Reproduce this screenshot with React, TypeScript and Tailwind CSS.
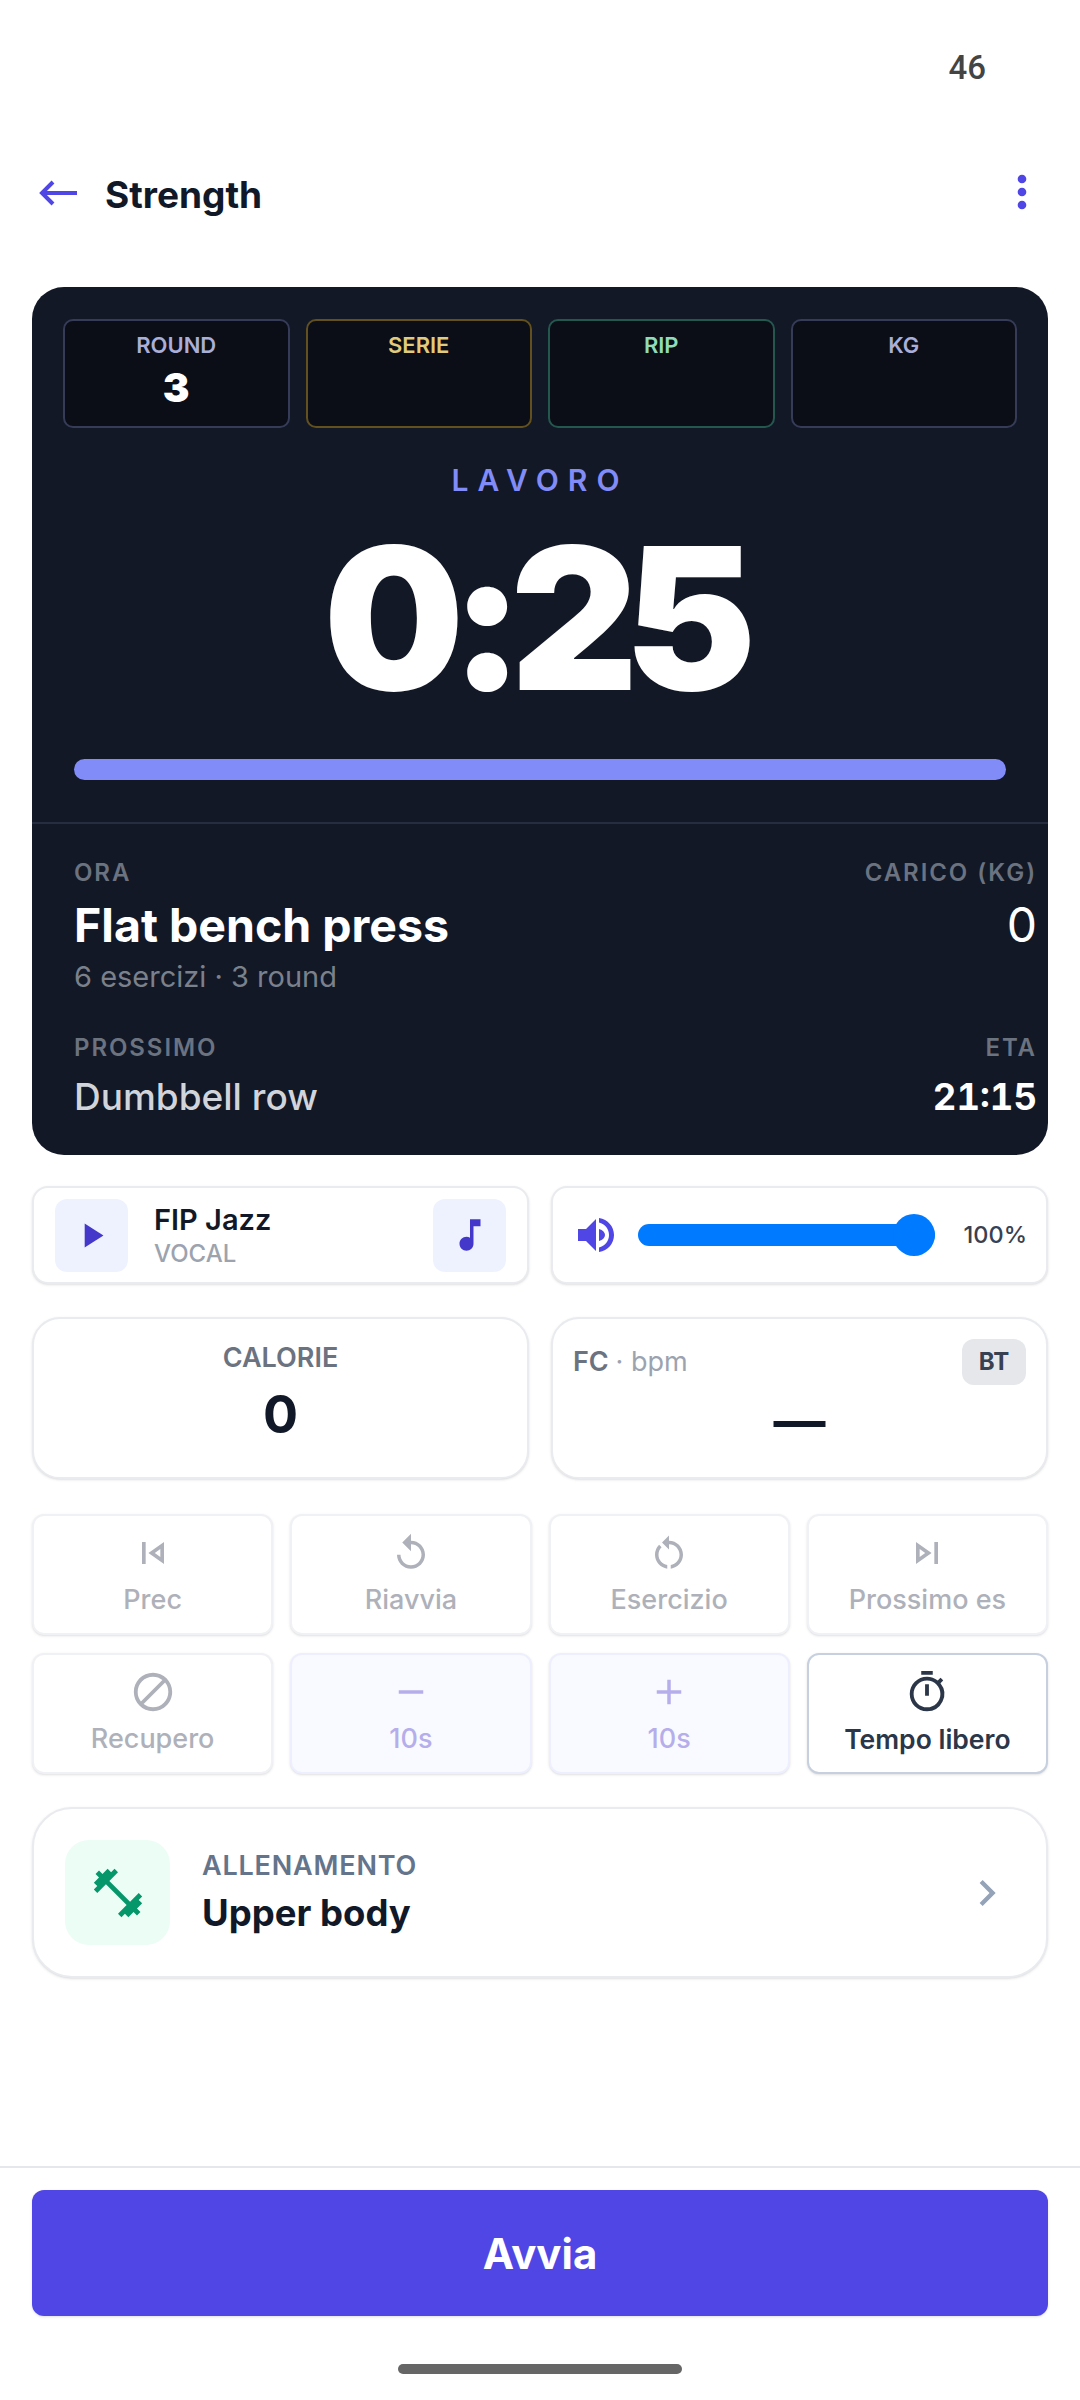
import type { ReactNode } from 'react';
import {
  MdAdd,
  MdBlock,
  MdChevronRight,
  MdFitnessCenter,
  MdMoreVert,
  MdMusicNote,
  MdOutlineSkipNext,
  MdOutlineSkipPrevious,
  MdOutlineTimer,
  MdPlayArrow,
  MdRemove,
  MdReplay,
  MdRestartAlt,
} from 'react-icons/md';

function BackArrow() {
  return (
    <svg viewBox="0 0 40 26" className="w-[40px] h-[26px] -mt-[5px] text-[#4f46e5]" fill="none" stroke="currentColor" strokeWidth="4">
      <path d="M39 13H4" />
      <path d="M15 2L4 13l11 11" />
    </svg>
  );
}

function VolumeIcon() {
  return (
    <svg viewBox="0 0 36 34" className="w-[36px] h-[34px] text-[#4f46e5]" fill="currentColor">
      <path d="M0 11h8L18 1v32L8 23H0z" />
      <path d="M21 11c4 1 6 3.500 6 6s-2 5-6 6z" />
      <path d="M21 0c9 1.500 15 8.500 15 17s-6 15.500-15 17v-4.500c6-1.500 10-6.500 10-12.500S27 6 21 4.500z" />
    </svg>
  );
}

function StatBox({ label, value, labelClass, borderClass }: { label: string; value?: string; labelClass: string; borderClass: string }) {
  return (
    <div className={`h-[109px] rounded-[10px] border-2 bg-[#0b0e17] pt-[12px] flex flex-col items-center ${borderClass}`}>
      <div className={`text-[22px] leading-[24px] font-semibold ${labelClass}`}>{label}</div>
      {value && <div className="mt-[9px] text-[40px] leading-[44px] font-black text-white">{value}</div>}
    </div>
  );
}

function ActionButton({ icon, label, variant = 'disabled' }: { icon: ReactNode; label: string; variant?: 'disabled' | 'adjust' | 'active' }) {
  const styles = {
    disabled: 'border-[#f0f1f4] bg-white text-[#aeb1b9]',
    adjust: 'border-[#eeeffe] bg-[#f9faff] text-[#b5aeea]',
    active: 'border-[#c6d0df] bg-white text-[#2b3648]',
  };
  return (
    <div className={`h-[121px] rounded-[12px] border-2 shadow-sm flex flex-col items-center pt-[16px] ${styles[variant]}`}>
      <div className="h-[42px] flex items-center justify-center">{icon}</div>
      <div className={`mt-[9px] leading-[34px] ${variant === 'active' ? 'text-[26.5px] font-semibold' : 'text-[27px] font-medium'}`}>{label}</div>
    </div>
  );
}

export default function App() {
  return (
    <div className="w-[1080px] h-[2400px] bg-white flex flex-col font-[Inter,sans-serif] overflow-hidden">
      <div className="h-[136px] flex items-center justify-end pr-[94px] font-[Roboto,sans-serif] text-[33px] font-medium text-[#444444]">46</div>

      <div className="h-[118px] flex items-center pl-[38px] pr-[32px]">
        <BackArrow />
        <div className="ml-[27px] text-[37px] leading-[44px] font-bold text-[#111827]">Strength</div>
        <MdMoreVert className="ml-auto w-[52px] h-[52px] text-[#4f46e5] -mt-[6px]" />
      </div>

      <div className="px-[32px] mt-[33px]">
        {/* Timer card */}
        <div className="h-[868px] rounded-[32px] bg-[#121826] overflow-hidden">
          <div className="px-[31px] pt-[32px] grid grid-cols-4 gap-x-4">
            <StatBox label="ROUND" value="3" labelClass="text-[#a9afd8]" borderClass="border-[#363c58]" />
            <StatBox label="SERIE" labelClass="text-[#e2cb7c]" borderClass="border-[#62501f]" />
            <StatBox label="RIP" labelClass="text-[#8fdcb9]" borderClass="border-[#24584f]" />
            <StatBox label="KG" labelClass="text-[#a9afd8]" borderClass="border-[#363c58]" />
          </div>
          <div className="mt-[34px] h-[36px] text-center text-[30px] leading-[36px] font-semibold tracking-[0.3em] text-[#818cf8]">LAVORO</div>
          <div className="mt-[10px] h-[220px] pr-[14px] text-center text-[198px] leading-[220px] font-black tracking-[-0.07em] text-white">0:25</div>
          <div className="mt-[31px] mx-[42px] h-[21px] rounded-full bg-[#818cf8]" />
          <div className="mt-[42px] h-[2px] bg-[#252d3f]" />
          <div className="pl-[42px] pr-[11px] pt-[35px]">
            <div className="flex justify-between">
              <div>
                <div className="h-[28px] text-[24px] leading-[28px] font-semibold tracking-[0.08em] text-[#6b7280]">ORA</div>
                <div className="mt-[10px] h-[56px] text-[46.5px] leading-[56px] font-bold text-white">Flat bench press</div>
                <div className="mt-[6px] h-[36px] text-[29px] leading-[36px] text-[#7b818c]">6 esercizi · 3 round</div>
              </div>
              <div className="text-right">
                <div className="h-[28px] text-[24px] leading-[28px] font-semibold tracking-[0.08em] text-[#6b7280]">CARICO (KG)</div>
                <div className="mt-[10px] h-[56px] text-[48px] leading-[56px] font-normal text-white">0</div>
              </div>
            </div>
            <div className="mt-[39px] flex justify-between">
              <div>
                <div className="h-[28px] text-[24px] leading-[28px] font-semibold tracking-[0.08em] text-[#6b7280]">PROSSIMO</div>
                <div className="mt-[13px] h-[44px] text-[37px] leading-[44px] font-medium text-[#d1d5db]">Dumbbell row</div>
              </div>
              <div className="text-right">
                <div className="h-[28px] text-[24px] leading-[28px] font-semibold tracking-[0.08em] text-[#6b7280]">ETA</div>
                <div className="mt-[13px] h-[44px] text-[36.5px] leading-[44px] font-bold tabular-nums text-white">21:15</div>
              </div>
            </div>
          </div>
        </div>

        {/* Radio + volume */}
        <div className="mt-[31px] grid grid-cols-2 gap-x-[22px]">
          <div className="h-[98px] rounded-[16px] border-2 border-[#e9ebee] bg-white shadow-sm flex items-center pl-[21px] pr-[21px]">
            <div className="w-[73px] h-[73px] rounded-[12px] bg-[#eef2ff] flex items-center justify-center">
              <MdPlayArrow className="w-[41px] h-[41px] text-[#4338ca]" />
            </div>
            <div className="ml-[26px]">
              <div className="text-[29px] leading-[36px] font-semibold text-[#111827]">FIP Jazz</div>
              <div className="mt-[1px] text-[24px] leading-[30px] font-medium text-[#9ca3af]">VOCAL</div>
            </div>
            <div className="ml-auto w-[73px] h-[73px] rounded-[12px] bg-[#eef2ff] flex items-center justify-center">
              <MdMusicNote className="w-[42px] h-[42px] text-[#4338ca]" />
            </div>
          </div>
          <div className="h-[98px] rounded-[16px] border-2 border-[#e9ebee] bg-white shadow-sm flex items-center pl-[25px] pr-[19px]">
            <VolumeIcon />
            <div className="ml-[24px] w-[297px] h-[22px] rounded-full bg-[#007aff] relative">
              <div className="absolute right-0 top-[-10px] w-[42px] h-[42px] rounded-full bg-[#007aff]" />
            </div>
            <div className="ml-auto text-[23.5px] leading-[32px] font-medium text-[#374151]">100%</div>
          </div>
        </div>

        {/* Calories + heart rate */}
        <div className="mt-[33px] grid grid-cols-2 gap-x-[22px]">
          <div className="h-[162px] rounded-[28px] border-2 border-[#e9ebee] bg-white shadow-sm flex flex-col items-center pt-[22px]">
            <div className="text-[27px] leading-[34px] font-semibold text-[#6b7280]">CALORIE</div>
            <div className="mt-[9px] text-[52px] leading-[62px] font-bold text-[#111827]">0</div>
          </div>
          <div className="h-[162px] rounded-[28px] border-2 border-[#e9ebee] bg-white shadow-sm px-[20px] pt-[20px]">
            <div className="flex items-center justify-between">
              <div className="text-[27px] leading-[34px] font-semibold text-[#6b7280]">
                FC <span className="font-normal text-[#9ca3af]">· bpm</span>
              </div>
              <div className="w-[64px] h-[46px] rounded-[12px] bg-[#e5e7eb] flex items-center justify-center text-[24px] font-bold text-[#374151]">BT</div>
            </div>
            <div className="mt-[6px] text-center text-[52px] leading-[62px] font-bold text-[#111827]">—</div>
          </div>
        </div>

        {/* Controls */}
        <div className="mt-[35px] grid grid-cols-4 gap-x-[17px] gap-y-[18px]">
          <ActionButton icon={<MdOutlineSkipPrevious className="w-[44px] h-[44px]" />} label="Prec" />
          <ActionButton icon={<MdReplay className="w-[42px] h-[42px]" />} label="Riavvia" />
          <ActionButton icon={<MdRestartAlt className="w-[42px] h-[42px]" />} label="Esercizio" />
          <ActionButton icon={<MdOutlineSkipNext className="w-[44px] h-[44px]" />} label="Prossimo es" />
          <ActionButton icon={<MdBlock className="w-[46px] h-[46px]" />} label="Recupero" />
          <ActionButton icon={<MdRemove className="w-[42px] h-[42px]" />} label="10s" variant="adjust" />
          <ActionButton icon={<MdAdd className="w-[42px] h-[42px]" />} label="10s" variant="adjust" />
          <ActionButton icon={<MdOutlineTimer className="w-[46px] h-[46px]" />} label="Tempo libero" variant="active" />
        </div>

        {/* Workout */}
        <div className="mt-[33px] h-[171px] rounded-[40px] border-2 border-[#e9ebee] bg-white shadow-sm flex items-center pl-[31px] pr-[33px]">
          <div className="w-[105px] h-[105px] rounded-[24px] bg-[#ecfdf5] flex items-center justify-center">
            <MdFitnessCenter className="w-[58px] h-[58px] text-[#059669]" />
          </div>
          <div className="ml-[32px] -mt-[2px]">
            <div className="text-[27px] leading-[34px] font-semibold tracking-[0.03em] text-[#64748b]">ALLENAMENTO</div>
            <div className="mt-[8px] text-[36.5px] leading-[44px] font-bold text-[#111827]">Upper body</div>
          </div>
          <MdChevronRight className="ml-auto w-[52px] h-[52px] text-[#94a3b8]" />
        </div>
      </div>

      {/* Footer */}
      <div className="mt-auto h-[234px] border-t-2 border-[#e5e7eb] px-[32px] pt-[22px] flex flex-col items-center">
        <div className="w-full h-[126px] rounded-[12px] bg-[#4f46e5] shadow-sm flex items-center justify-center text-[42px] font-bold text-white">Avvia</div>
        <div className="mt-[48px] w-[284px] h-[10px] rounded-full bg-[#666666]" />
      </div>
    </div>
  );
}
